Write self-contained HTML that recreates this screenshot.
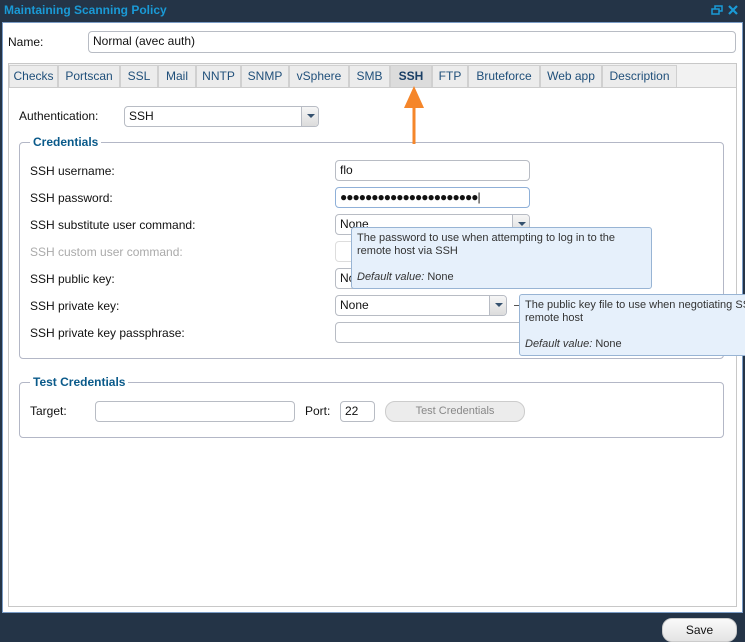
<!DOCTYPE html>
<html><head><meta charset="utf-8"><style>
*{box-sizing:border-box;margin:0;padding:0}
body{width:745px;height:642px;background:#243447;position:relative;overflow:hidden;font-family:"Liberation Sans","DejaVu Sans",sans-serif;font-size:12px;color:#111}
.a{position:absolute}
.title{left:4px;top:3px;color:#1a9ad6;font-weight:bold;font-size:12px}
.win{left:2px;top:22px;width:741px;height:591px;background:#fff;border:1px solid #7a9cc6}
.inp{position:absolute;background:#fff;border:1px solid #b8bcc4;border-radius:4px;height:21px;padding:2px 4px;font-size:12px;white-space:nowrap;overflow:hidden}
.dd{position:absolute;right:0;top:0;width:17px;height:19px;border-left:1px solid #b8bcc4;background:linear-gradient(#f6f6f6,#dcdcdc);border-radius:0 3px 3px 0}
.dd:after{content:"";position:absolute;left:5px;top:7px;border-left:4px solid transparent;border-right:4px solid transparent;border-top:4px solid #35516e}
.tab{position:absolute;top:65px;height:22px;background:#ececec;border:1px solid #d0d0d0;border-bottom:none;color:#1f4f7a;text-align:center;line-height:20px;font-size:12px}
.fs{position:absolute;border:1px solid #b3b7c6;border-radius:4px}
.lg{position:absolute;background:#fff;color:#0a5a8a;font-weight:bold;padding:0 3px}
.lbl{position:absolute;font-size:12px}
.tip{position:absolute;background:#e6f0fb;border:1px solid #98b4d4;border-radius:3px;padding:4px 5px;font-size:11px;line-height:13px;color:#333}
</style></head><body>
<div class="a title">Maintaining Scanning Policy</div>
<svg class="a" style="left:711px;top:5px" width="12" height="11"><rect x="1" y="4" width="7" height="5" fill="none" stroke="#1a9ad6" stroke-width="1.5"/><path d="M4 4V1h7v5H8" fill="none" stroke="#1a9ad6" stroke-width="1.5"/></svg>
<svg class="a" style="left:727px;top:4px" width="12" height="12"><path d="M2 2L10 10M10 2L2 10" stroke="#1a9ad6" stroke-width="2.2"/></svg>
<div class="a win"></div>
<div class="lbl" style="left:8px;top:35px">Name:</div>
<div class="inp" style="left:88px;top:31px;width:648px;height:22px">Normal (avec auth)</div>
<div class="a" style="left:8px;top:63px;width:729px;height:544px;border:1px solid #c8c8c8"></div>
<div class="a" style="left:9px;top:64px;width:727px;height:24px;background:#f2f2f2;border-bottom:1px solid #ccc"></div>
<div class="tab" style="left:9px;width:49px">Checks</div>
<div class="tab" style="left:58px;width:62px">Portscan</div>
<div class="tab" style="left:120px;width:38px">SSL</div>
<div class="tab" style="left:158px;width:38px">Mail</div>
<div class="tab" style="left:196px;width:45px">NNTP</div>
<div class="tab" style="left:241px;width:48px">SNMP</div>
<div class="tab" style="left:289px;width:60px">vSphere</div>
<div class="tab" style="left:349px;width:41px">SMB</div>
<div class="tab" style="left:390px;width:42px;background:#dcdcdc;font-weight:bold;color:#1a3f66">SSH</div>
<div class="tab" style="left:432px;width:36px">FTP</div>
<div class="tab" style="left:468px;width:72px">Bruteforce</div>
<div class="tab" style="left:540px;width:62px">Web app</div>
<div class="tab" style="left:602px;width:75px">Description</div>
<div class="lbl" style="left:19px;top:109px">Authentication:</div>
<div class="inp" style="left:124px;top:106px;width:195px">SSH<div class="dd"></div></div>
<div class="fs" style="left:19px;top:142px;width:705px;height:217px"></div>
<div class="lg" style="left:30px;top:135px">Credentials</div>
<div class="lbl" style="left:30px;top:164px">SSH username:</div>
<div class="lbl" style="left:30px;top:191px">SSH password:</div>
<div class="lbl" style="left:30px;top:218px">SSH substitute user command:</div>
<div class="lbl" style="left:30px;top:245px;color:#aaa">SSH custom user command:</div>
<div class="lbl" style="left:30px;top:272px">SSH public key:</div>
<div class="lbl" style="left:30px;top:299px">SSH private key:</div>
<div class="lbl" style="left:30px;top:326px">SSH private key passphrase:</div>
<div class="inp" style="left:335px;top:160px;width:195px">flo</div>
<div class="inp" style="left:335px;top:187px;width:195px;border-color:#8fb0d8;letter-spacing:-1px">●●●●●●●●●●●●●●●●●●●●●●|</div>
<div class="inp" style="left:335px;top:214px;width:195px">None<div class="dd"></div></div>
<div class="inp" style="left:335px;top:241px;width:195px;border-color:#ddd"></div>
<div class="inp" style="left:335px;top:268px;width:195px">None</div>
<div class="inp" style="left:335px;top:295px;width:172px">None<div class="dd"></div></div>
<div class="a" style="left:514px;top:305px;width:6px;height:1px;background:#555"></div>
<div class="inp" style="left:335px;top:322px;width:195px"></div>
<div class="tip" style="left:351px;top:227px;width:301px;height:62px">The password to use when attempting to log in to the remote host via SSH<br><br><i>Default value:</i> None</div>
<div class="tip" style="left:519px;top:294px;width:240px;height:62px;white-space:nowrap">The public key file to use when negotiating SSH<br>remote host<br><br><i>Default value:</i> None</div>
<div class="fs" style="left:19px;top:382px;width:705px;height:56px"></div>
<div class="lg" style="left:30px;top:375px">Test Credentials</div>
<div class="lbl" style="left:30px;top:404px">Target:</div>
<div class="inp" style="left:95px;top:401px;width:200px"></div>
<div class="lbl" style="left:305px;top:404px">Port:</div>
<div class="inp" style="left:340px;top:401px;width:35px">22</div>
<div class="a" style="left:385px;top:401px;width:140px;height:21px;border:1px solid #ccc;border-radius:10px;background:#ececec;color:#888;text-align:center;line-height:19px;font-size:11px">Test Credentials</div>
<svg class="a" style="left:403px;top:86px" width="22" height="60"><path d="M11 20V58" stroke="#f5862a" stroke-width="3"/><path d="M1 22L11 0L21 22Z" fill="#f5862a"/></svg>
<div class="a" style="left:662px;top:618px;width:75px;height:24px;background:linear-gradient(#fafafa,#e4e4e4);border:1px solid #ccc;border-radius:10px;text-align:center;line-height:22px;font-size:12px">Save</div>
</body></html>
